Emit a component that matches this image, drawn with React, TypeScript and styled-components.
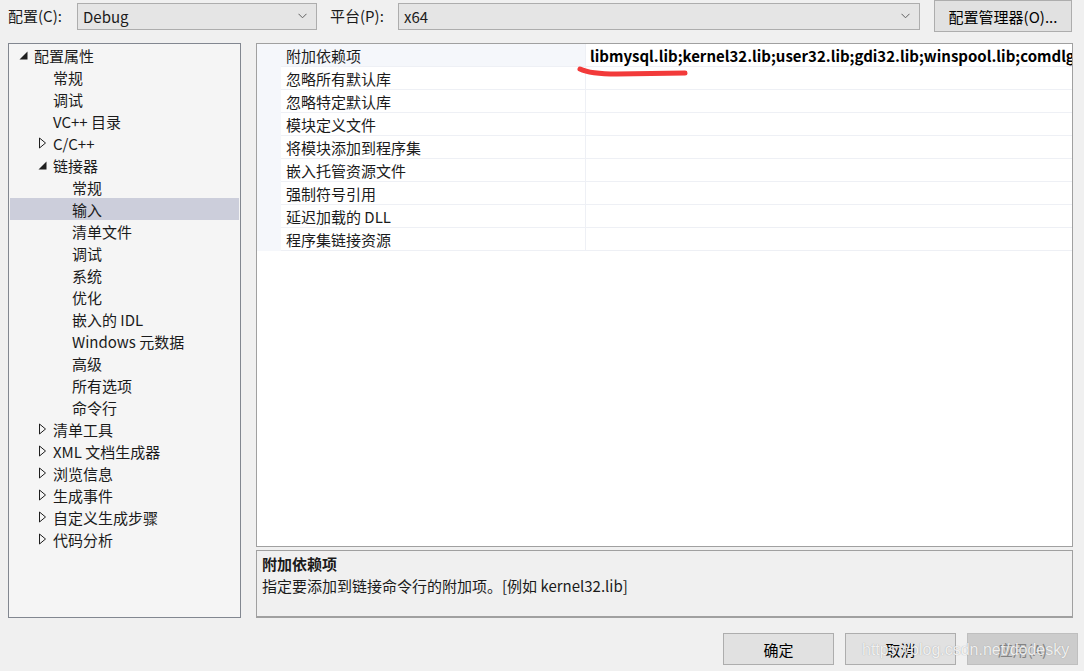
import React from "react";
import styled, { createGlobalStyle } from "styled-components";

const GlobalStyle = createGlobalStyle`
  html, body { margin: 0; padding: 0; background: #f0f0f0; }
  body {
    font-family: "Noto Sans CJK SC", "Noto Sans", sans-serif;
    font-size: 15px;
    color: #1b1b1b;
  }
  * { box-sizing: border-box; }
`;

const Page = styled.div`
  position: relative;
  width: 1084px;
  height: 671px;
  display: flex;
  flex-direction: column;
  overflow: hidden;
`;

const TopBar = styled.div`
  display: flex;
  align-items: center;
  height: 32px;
  padding-left: 8px;
`;

const Label = styled.span<{ $w: number; $ml?: number }>`
  width: ${(p) => p.$w}px;
  margin-left: ${(p) => p.$ml ?? 0}px;
  font-size: 15px;
  line-height: 20px;
  white-space: nowrap;
`;

const Combo = styled.div<{ $w: number }>`
  width: ${(p) => p.$w}px;
  height: 27px;
  border: 1px solid #adadad;
  background: #e5e5e5;
  display: flex;
  align-items: center;
  justify-content: space-between;
  padding: 0 9px 0 5px;
  font-size: 15px;
`;

const Chevron = () => (
  <svg width="9" height="6" viewBox="0 0 9 6">
    <path d="M0.5 0.8 L4.5 4.8 L8.5 0.8" fill="none" stroke="#606060" strokeWidth="1" />
  </svg>
);

const Button = styled.div<{ $w: number; $ml?: number; $disabled?: boolean }>`
  width: ${(p) => p.$w}px;
  height: 32px;
  margin-left: ${(p) => p.$ml ?? 0}px;
  border: 1px solid ${(p) => (p.$disabled ? "#bfbfbf" : "#adadad")};
  background: ${(p) => (p.$disabled ? "#cccccc" : "#e1e1e1")};
  color: ${(p) => (p.$disabled ? "#838383" : "#000")};
  display: flex;
  align-items: center;
  justify-content: center;
  font-size: 15px;
  white-space: nowrap;
`;

const Main = styled.div`
  display: flex;
  margin-top: 11px;
  height: 575px;
  padding-left: 8px;
`;

const TreePanel = styled.div`
  width: 233px;
  height: 575px;
  border: 1px solid #828790;
  background: #f5f5f5;
  padding: 0 1px;
`;

const TreeRow = styled.div<{ $level: number; $selected?: boolean }>`
  height: 22px;
  display: flex;
  align-items: center;
  padding-left: ${(p) => 5 + p.$level * 19}px;
  background: ${(p) => (p.$selected ? "#cccedb" : "transparent")};
  font-size: 15px;
  white-space: nowrap;
`;

const ToggleBox = styled.span`
  width: 17px;
  height: 22px;
  margin-right: 2px;
  display: flex;
  align-items: center;
  justify-content: center;
`;

const Expanded = () => (
  <svg width="9" height="9" viewBox="0 0 9 9">
    <path d="M8.5 0.5 L8.5 8.5 L0.5 8.5 Z" fill="#1e1e1e" />
  </svg>
);

const Collapsed = () => (
  <svg width="9" height="12" viewBox="0 0 9 12">
    <path d="M1.5 1 L7.5 6 L1.5 11 Z" fill="none" stroke="#1e1e1e" strokeWidth="1" />
  </svg>
);

const RightColumn = styled.div`
  width: 817px;
  margin-left: 15px;
  display: flex;
  flex-direction: column;
  gap: 3px;
`;

const Grid = styled.div`
  position: relative;
  height: 504px;
  border: 1px solid #a0a0a0;
  background: #ffffff;
  overflow: hidden;
`;

const GridRow = styled.div`
  display: grid;
  grid-template-columns: 24px 304px 1fr;
  height: 23px;
`;

const Gutter = styled.div`
  background: #f5f7fb;
`;

const NameCell = styled.div<{ $active?: boolean }>`
  background: ${(p) => (p.$active ? "#f5f7fb" : "#ffffff")};
  border-bottom: 1px solid #eef0f5;
  padding-left: 5px;
  display: flex;
  align-items: center;
  font-size: 15px;
  white-space: nowrap;
`;

const ValueCell = styled.div`
  border-left: 1px solid #eef0f5;
  border-bottom: 1px solid #eef0f5;
  padding-left: 4px;
  display: flex;
  align-items: center;
  font-family: "Noto Sans CJK SC", sans-serif;
  font-weight: 700;
  font-size: 15px;
  color: #000;
  white-space: nowrap;
  overflow: hidden;
`;

const RedMark = styled.svg`
  position: absolute;
  left: 0;
  top: 0;
  pointer-events: none;
`;

const Desc = styled.div`
  height: 68px;
  border: 1px solid #a0a0a0;
  border-bottom: 2px solid #a0a0a0;
  background: #f0f0f0;
  padding: 2px 5px;
`;

const DescTitle = styled.div`
  font-weight: 700;
  line-height: 22px;
  font-size: 15px;
`;

const DescText = styled.div`
  line-height: 22px;
  font-size: 15px;
`;

const Footer = styled.div`
  display: flex;
  justify-content: flex-end;
  padding-right: 6px;
  margin-top: 15px;
`;

const Watermark = styled.div`
  position: absolute;
  left: 862px;
  top: 641px;
  font-family: "Liberation Sans", Arial, sans-serif;
  font-size: 16px;
  color: rgba(255, 255, 255, 0.85);
  text-shadow: 0 0 1px rgba(110, 110, 110, 0.6);
  pointer-events: none;
  white-space: nowrap;
`;

type Node = { label: string; level: number; toggle?: "open" | "closed"; selected?: boolean };

const tree: Node[] = [
  { label: "配置属性", level: 0, toggle: "open" },
  { label: "常规", level: 1 },
  { label: "调试", level: 1 },
  { label: "VC++ 目录", level: 1 },
  { label: "C/C++", level: 1, toggle: "closed" },
  { label: "链接器", level: 1, toggle: "open" },
  { label: "常规", level: 2 },
  { label: "输入", level: 2, selected: true },
  { label: "清单文件", level: 2 },
  { label: "调试", level: 2 },
  { label: "系统", level: 2 },
  { label: "优化", level: 2 },
  { label: "嵌入的 IDL", level: 2 },
  { label: "Windows 元数据", level: 2 },
  { label: "高级", level: 2 },
  { label: "所有选项", level: 2 },
  { label: "命令行", level: 2 },
  { label: "清单工具", level: 1, toggle: "closed" },
  { label: "XML 文档生成器", level: 1, toggle: "closed" },
  { label: "浏览信息", level: 1, toggle: "closed" },
  { label: "生成事件", level: 1, toggle: "closed" },
  { label: "自定义生成步骤", level: 1, toggle: "closed" },
  { label: "代码分析", level: 1, toggle: "closed" },
];

const props = [
  { name: "附加依赖项", value: "libmysql.lib;kernel32.lib;user32.lib;gdi32.lib;winspool.lib;comdlg32.lib;advapi32.lib;shell32.lib" },
  { name: "忽略所有默认库", value: "" },
  { name: "忽略特定默认库", value: "" },
  { name: "模块定义文件", value: "" },
  { name: "将模块添加到程序集", value: "" },
  { name: "嵌入托管资源文件", value: "" },
  { name: "强制符号引用", value: "" },
  { name: "延迟加载的 DLL", value: "" },
  { name: "程序集链接资源", value: "" },
];

export default function App() {
  return (
    <>
      <GlobalStyle />
      <Page>
        <TopBar>
          <Label $w={69}>配置(C):</Label>
          <Combo $w={240}>
            <span>Debug</span>
            <Chevron />
          </Combo>
          <Label $w={68} $ml={13}>平台(P):</Label>
          <Combo $w={522}>
            <span>x64</span>
            <Chevron />
          </Combo>
          <Button $w={138} $ml={14}>配置管理器(O)...</Button>
        </TopBar>
        <Main>
          <TreePanel>
            {tree.map((n, i) => (
              <TreeRow key={i} $level={n.level} $selected={n.selected}>
                <ToggleBox>
                  {n.toggle === "open" ? <Expanded /> : n.toggle === "closed" ? <Collapsed /> : null}
                </ToggleBox>
                {n.label}
              </TreeRow>
            ))}
          </TreePanel>
          <RightColumn>
            <Grid>
              {props.map((p, i) => (
                <GridRow key={i}>
                  <Gutter />
                  <NameCell $active={i === 0}>{p.name}</NameCell>
                  <ValueCell>{p.value}</ValueCell>
                </GridRow>
              ))}
              <RedMark width="817" height="60" viewBox="0 0 817 60">
                <path
                  d="M323 25 Q 333 30 360 30 L 428 29"
                  fill="none"
                  stroke="#f23a3a"
                  strokeWidth="5"
                  strokeLinecap="round"
                />
              </RedMark>
            </Grid>
            <Desc>
              <DescTitle>附加依赖项</DescTitle>
              <DescText>指定要添加到链接命令行的附加项。[例如 kernel32.lib]</DescText>
            </Desc>
          </RightColumn>
        </Main>
        <Footer>
          <Button $w={111}>确定</Button>
          <Button $w={111} $ml={11}>取消</Button>
          <Button $w={111} $ml={11} $disabled>应用(A)</Button>
        </Footer>
        <Watermark>https://blog.csdn.net/dodesky</Watermark>
      </Page>
    </>
  );
}
